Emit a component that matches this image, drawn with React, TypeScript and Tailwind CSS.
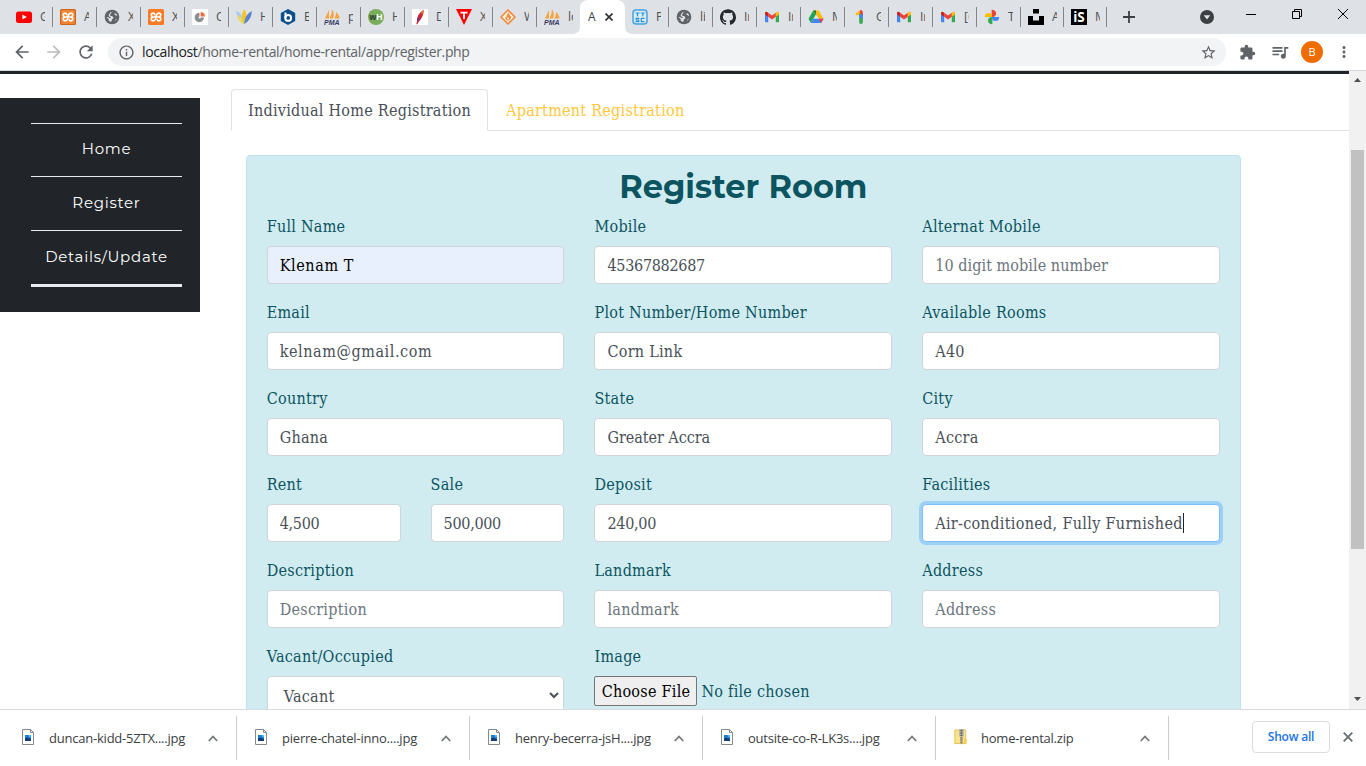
import React from 'react';
import { SiGithub, SiUnsplash } from 'react-icons/si';
import { MdStarBorder, MdExtension, MdQueueMusic, MdMoreVert, MdArrowBack, MdArrowForward, MdRefresh, MdInfoOutline } from 'react-icons/md';

function Youtube() {
  return <svg width="16" height="16" viewBox="0 0 16 16"><rect y="2.5" width="16" height="11.5" rx="2.5" fill="#f00" /><path d="M6.4 5.6v5L10.8 8.1z" fill="#fff" /></svg>;
}
function Xampp({ framed = false }: { framed?: boolean }) {
  return (
    <svg width="16" height="16" viewBox="0 0 16 16">
      <rect width="16" height="16" rx="1.5" fill={framed ? '#c9651a' : '#fb7a24'} />
      {framed && <rect x="1" y="1" width="14" height="14" rx="1" fill="#f08432" />}
      <path d="M5 8H11M6.800 5.500Q6.500 4.200 5 4.200T3.200 5.700Q3.200 7 4.400 8Q3.200 9 3.200 10.300T5 11.800Q6.500 11.800 7.300 10.300L8.700 5.700Q9.500 4.200 11 4.200T12.800 5.700Q12.800 7 11.600 8Q12.800 9 12.800 10.300T11 11.800T9.200 10.500" fill="none" stroke="#fff" strokeWidth="1.700" strokeLinecap="round" />
    </svg>
  );
}
function Globe() {
  return (
    <svg width="16" height="16" viewBox="0 0 16 16">
      <circle cx="8" cy="8" r="7.3" fill="#5f6368" />
      <path d="M9.500 2.500Q7 3 6.800 4.700L5.800 5.800Q6 7 7.500 7T9.500 9Q9.300 10 8 10.200L7.500 12.500Q5.500 13 4.500 11.500L4.800 10.200 3.200 8.800 2.300 8.400 3 8Q5 8 5.300 9L7 8.800Q7 7.800 5.500 7.700Q4 7 5 5.200L6.500 3.200ZM10.300 4.700L10.500 5.600 12 6.500 13.300 7Q13 5.500 11.700 4.200ZM12.800 9.500Q12.300 11.300 11 12.200L11.500 10.500Z" fill="#dee1e6" />
    </svg>
  );
}
function Pie() {
  return <svg width="16" height="16" viewBox="0 0 16 16"><path fill="#fff" d="M0 0h16v16H0z" /><path d="M7.500 8.500V3.800A4.700 4.700 0 1 0 12 8.500Z" fill="#8a8f94" /><path d="M8.600 7.500V3A4.500 4.500 0 0 1 13 7.500Z" fill="#f26b3a" /><circle cx="7.600" cy="8.400" r="1" fill="#fff" /></svg>;
}
function Petals() {
  return <svg width="16" height="16" viewBox="0 0 16 16"><path d="M0 2Q7 4 8 15Q2 13 0 2Z" fill="#a9c8ee" /><path d="M1 6Q6 7 8 15Q3 14 1 6Z" fill="#eadb5c" /><path d="M8 0Q13 6 8 15Q4 7 8 0Z" fill="#f3c622" /><path d="M16 2Q15 12 8 15Q9 5 16 2Z" fill="#5b82d1" /></svg>;
}
function Hexagon() {
  return <svg width="16" height="16" viewBox="0 0 16 16"><path d="M8 0l7.200 4v8L8 16 .8 12V4z" fill="#0d4f8c" /><path d="M5.500 3.500v5.700" stroke="#fff" strokeWidth="2" /><circle cx="8.200" cy="8.900" r="2.900" fill="none" stroke="#fff" strokeWidth="2" /></svg>;
}
function Pma() {
  return <svg width="16" height="16" viewBox="0 0 16 16"><path d="M5 1L1 9.500H5ZM8 0Q11 5 9 9.500H5.500Q8 5 8 0ZM12 3Q15.500 6 15.500 9.500H10.500Q12.500 6 12 3Z" fill="#f9a33c" /><text x="0" y="15.600" textLength="15.500" lengthAdjust="spacingAndGlyphs" fontFamily="Liberation Sans" fontSize="6.800" fontWeight="bold" fontStyle="italic" fill="#3b3b66">PMA</text></svg>;
}
function Wh() {
  return <svg width="16" height="16" viewBox="0 0 16 16"><circle cx="8" cy="8" r="8" fill="#79ad5b" /><text x="1.500" y="11" textLength="13" lengthAdjust="spacingAndGlyphs" fontFamily="Liberation Sans" fontSize="8.500" fontWeight="bold" fill="#fff"><tspan fill="#27351f">w</tspan>H</text></svg>;
}
function Feather() {
  return <svg width="16" height="16" viewBox="0 0 16 16"><path fill="#fff" d="M0 0h16v16H0z" /><path d="M11.700 .8Q12 7 7 12.500L5 15.500L4.300 15L5.200 11.500Q5 5 11.700 .8Z" fill="#c42a3a" /><path d="M5.200 8.500L5 12.500L8.200 10Z" fill="#6d2c7d" /><path d="M11.700 .8L8.500 4L11 5Z" fill="#ef7c24" /></svg>;
}
function Triangle() {
  return <svg width="16" height="16" viewBox="0 0 16 16"><path d="M0 0h16L8 16Z" fill="#f00" /><path d="M4.500 3.600H11.500M8 3.600V10" stroke="#fff" strokeWidth="1.800" /></svg>;
}
function Fire() {
  return <svg width="16" height="16" viewBox="0 0 16 16"><path d="M8 1L15 8L8 15L1 8Z" fill="#fff1e2" stroke="#f5893b" strokeWidth="1.700" strokeLinejoin="round" /><path d="M8.500 3.500Q9 5.500 10.500 7T9.500 11Q8 12 6.500 11T5.500 7.500L6.500 8.500Q6.500 5.500 8.500 3.500Z" fill="#f5893b" /><circle cx="8" cy="9.500" r="1" fill="#fff" /></svg>;
}
function Ttsc() {
  return <svg width="16" height="16" viewBox="0 0 16 16"><rect x="1" y="1" width="14" height="14" rx="3" fill="#d8ebf7" stroke="#46a2df" strokeWidth="1.500" /><path d="M3.500 4h4M5.500 4v3.300M8.800 4h4M10.800 4v3.300M7.300 9.300H4.200v1.700h2.500v1.700H3.500M12.500 9.300H9.300v3.400h3.200" fill="none" stroke="#2e8fd3" strokeWidth="1.200" /></svg>;
}
function Gmail() {
  return <svg width="16" height="16" viewBox="0 0 16 16"><path d="M1 5v7.500q0 .8.800.8H4.200V7Z" fill="#4285f4" /><path d="M15 5v7.500q0 .8-.8.800H11.800V7Z" fill="#34a853" /><path d="M4.200 3.800L8 6.600L11.800 3.800V7.700L8 10.600L4.200 7.700Z" fill="#ea4335" /><path d="M1 4Q1 2.500 2.500 2.700L4.200 3.800V7.700L1 5.400Z" fill="#c5221f" /><path d="M15 4Q15 2.500 13.500 2.700L11.800 3.800V7.700L15 5.400Z" fill="#fbbc04" /></svg>;
}
function Drive() {
  return <svg width="16" height="16" viewBox="0 0 16 16"><path d="M5.300 1.500H8L9.500 5.500L5.300 9.800L2.900 13.900L.5 9.800Z" fill="#23a455" /><path d="M5.300 1.500H10.700L15.500 9.800H10.700L8 5.300Z" fill="#ffba00" /><path d="M5.300 1.500L8 1.500V5.300Z" fill="#188038" /><path d="M8 5.300L10.700 9.800H5.300Z" fill="#dee1e6" /><path d="M5.300 9.800H15.500L13.100 13.900H2.900Z" fill="#4285f4" /><path d="M10.700 9.800H15.500L13.100 13.900Z" fill="#ea4335" /></svg>;
}
function One() {
  return <svg width="16" height="16" viewBox="0 0 16 16"><path d="M7.200 4H10.800V12.800Q10.800 15 9 15T7.200 12.800Z" fill="#34a853" /><path d="M7.200 4H10.800V10L7.200 8Z" fill="#4285f4" /><path d="M8 1.200Q10.800 .2 10.800 3.500V6L7.200 4Z" fill="#ea4335" /><path d="M3.600 4.300L7.600 1.500V5.300L5.500 6.600Q3.300 6.600 3.600 4.300Z" fill="#fbbc04" /></svg>;
}
function Photos() {
  return <svg width="16" height="16" viewBox="0 0 16 16"><path d="M7.600 .8Q12 .8 12 4.500T7.600 8Z" fill="#ea4335" /><path d="M15.200 8Q15.200 12 11.500 12T8 8Z" fill="#4285f4" /><path d="M8.400 15.200Q4 15.200 4 11.500T8.400 8Z" fill="#34a853" /><path d="M.8 8Q.8 4 4.500 4T8 8Z" fill="#fbbc04" /></svg>;
}
function Is() {
  return <svg width="16" height="16" viewBox="0 0 16 16"><path d="M0 0h16v16H0z" /><text x="2.200" y="13" textLength="11.500" lengthAdjust="spacingAndGlyphs" fontFamily="Open Sans" fontSize="14" fontWeight="bold" fill="#fff">iS</text></svg>;
}

const leftTabs = [
  [<Youtube />, 'G'], [<Xampp framed />, 'A'], [<Globe />, 'X'], [<Xampp />, 'X'], [<Pie />, 'C'], [<Petals />, 'H'], [<Hexagon />, 'B'],
  [<Pma />, 'p'], [<Wh />, 'H'], [<Feather />, 'D'], [<Triangle />, 'X'], [<Fire />, 'W'], [<Pma />, 'lo'],
] as const;
const rightTabs = [
  [<Ttsc />, 'P'], [<Globe />, 'li'], [<SiGithub size={16} color="#24292e" />, 'In'], [<Gmail />, 'In'], [<Drive />, 'M'], [<One />, 'G'],
  [<Gmail />, 'In'], [<Gmail />, '[G'], [<Photos />, 'T'], [<SiUnsplash size={16} color="#000" />, 'A'], [<Is />, 'M'],
] as const;

function Tab({ icon, title, last }: { icon: React.ReactNode; title: string; last?: boolean }) {
  return (
    <div className={`flex h-[34px] shrink-0 items-center pl-[7px] ${last ? 'w-[43px]' : 'w-11'}`}>
      <span className="size-4 shrink-0">{icon}</span>
      <span className="ml-2 w-[5px] overflow-hidden whitespace-nowrap text-xs leading-4 text-[#4c5055]">{title}</span>
      <span className={`ml-auto h-5 w-px ${title === 'lo' ? 'bg-transparent' : 'bg-[#82868b]'}`} />
    </div>
  );
}

function TabStrip() {
  return (
    <div className="flex h-[34px] bg-[#dee1e6] pl-[9px]">
      {leftTabs.map(([icon, title], i) => <Tab key={i} icon={icon} title={title} />)}
      <div className="relative -ml-px flex h-[34px] w-[45px] shrink-0 items-center rounded-t-lg bg-white pl-2">
        <svg className="absolute bottom-0 -left-2" width="8" height="8"><path d="M8 0V8H0Q8 8 8 0" fill="#fff" /></svg>
        <svg className="absolute bottom-0 -right-2" width="8" height="8"><path d="M0 0V8H8Q0 8 0 0" fill="#fff" /></svg>
        <span className="w-2 overflow-hidden text-xs text-[#3c4043]">A</span>
        <svg className="ml-[9px]" width="8" height="8" viewBox="0 0 8 8"><path d="M.5.5l7 7m0-7l-7 7" stroke="#2f3336" strokeWidth="1.700" /></svg>
      </div>
      {rightTabs.map(([icon, title], i) => <Tab key={i} icon={icon} title={title} last={i >= 9} />)}
      <svg className="mt-[11px] ml-4" width="12" height="12"><path d="M6 0v12M0 6h12" stroke="#3c4043" strokeWidth="1.800" /></svg>
      <div className="ml-auto flex">
        <svg className="mt-[10px]" width="14" height="14"><circle cx="7" cy="7" r="7" fill="#3c4043" /><path d="M3.700 5.200h6.600L7 9.600z" fill="#dee1e6" /></svg>
        <svg className="mt-[14px] ml-8" width="10" height="1"><path fill="#000" d="M0 0h10v1H0z" /></svg>
        <svg className="mt-[9px] ml-9" width="10" height="10"><path d="M.5 2.500h7v7h-7zM2.500 2.500v-2h7v7h-2" fill="none" stroke="#000" /></svg>
        <svg className="mt-[9px] mr-[18px] ml-9" width="10" height="10"><path d="M0 0l10 10M10 0L0 10" stroke="#000" /></svg>
      </div>
    </div>
  );
}

function Toolbar() {
  return (
    <div className="flex h-9 items-center bg-white pl-3 text-[#5f6368]">
      <MdArrowBack size={20} />
      <MdArrowForward size={20} className="ml-3 text-[#babcbe]" />
      <MdRefresh size={20} className="ml-3" />
      <div className="ml-3 flex h-7 w-[1118px] items-center rounded-full bg-[#f1f3f4] pl-[10px]">
        <MdInfoOutline size={17} />
        <span className="ml-[7px] text-sm leading-5 tracking-[-0.35px] text-[#5f6368]"><span className="text-[#202124]">localhost</span>/home-rental/home-rental/app/register.php</span>
        <MdStarBorder size={17} className="mr-[9px] ml-auto" />
      </div>
      <MdExtension size={17} className="ml-[13px]" />
      <MdQueueMusic size={20} className="ml-[14px]" />
      <span className="ml-[11px] flex size-[22px] items-center justify-center rounded-full bg-[#ef6c00] text-[11px] text-white">B</span>
      <MdMoreVert size={18} className="ml-3" />
    </div>
  );
}

function Sidebar() {
  return (
    <aside className="mt-6 h-[214px] w-[200px] shrink-0 bg-[#212529] pt-[25px] pr-[18px] pl-[31px] font-['Montserrat','Inter',sans-serif] text-[15px] tracking-[0.73px] text-white">
      <a className="flex h-[53px] items-center justify-center border-t border-[#e9ecef] pb-0.5">Home</a>
      <a className="flex h-[54px] items-center justify-center border-t border-[#e9ecef]">Register</a>
      <a className="flex h-[57px] items-center justify-center border-t border-b-3 border-[#e9ecef]">Details/Update</a>
    </aside>
  );
}

type FieldProps = { label: string; value: string; kind?: 'text' | 'placeholder' | 'autofill' | 'focus'; spacing?: string };
const kinds = {
  text: 'border-[#ced4da] bg-white text-[#495057]',
  placeholder: 'border-[#ced4da] bg-white text-[#6c757d]',
  autofill: 'border-[#ced4da] bg-[#e8f0fe] text-black',
  focus: 'border-[#80bdff] bg-white text-[#495057] shadow-[0_0_0_3px_rgba(0,123,255,0.25)]',
};
function Field({ label, value, kind = 'text', spacing = '' }: FieldProps) {
  return (
    <div className="h-[86px] min-w-0">
      <div className="mb-1.5 h-[26px] pt-px leading-6">{label}</div>
      <div className={`flex h-[38px] items-center rounded border px-3 whitespace-nowrap ${kinds[kind]}`}>
        <span className={`pt-0.5 ${spacing}`}>{value}</span>
        {kind === 'focus' && <span className="h-5 w-px bg-[#212529]" />}
      </div>
    </div>
  );
}

function Form() {
  return (
    <div className="ml-[15px] h-[640px] w-[995px] rounded border border-[#bee5eb] bg-[#d1ecf1] pt-3 pr-5 pl-[19.7px] text-[#0c5460]">
      <h2 className="mb-[7px] h-[39px] text-center font-['Montserrat','Inter',sans-serif] text-[32px] leading-[37px] font-bold tracking-normal">Register Room</h2>
      <div className="grid grid-cols-3 gap-x-[30px]">
        <Field label="Full Name" value="Klenam T" kind="autofill" spacing="tracking-[0.6px]" />
        <Field label="Mobile" value="45367882687" spacing="tracking-[-0.3px]" />
        <Field label="Alternat Mobile" value="10 digit mobile number" kind="placeholder" spacing="tracking-[0.06px]" />
        <Field label="Email" value="kelnam@gmail.com" spacing="tracking-[0.57px]" />
        <Field label="Plot Number/Home Number" value="Corn Link" />
        <Field label="Available Rooms" value="A40" />
        <Field label="Country" value="Ghana" />
        <Field label="State" value="Greater Accra" spacing="tracking-[-0.04px]" />
        <Field label="City" value="Accra" />
        <div className="grid grid-cols-2 gap-x-[30px]">
          <Field label="Rent" value="4,500" spacing="tracking-[-0.3px]" />
          <Field label="Sale" value="500,000" spacing="tracking-[-0.3px]" />
        </div>
        <Field label="Deposit" value="240,00" spacing="tracking-[-0.3px]" />
        <Field label="Facilities" value="Air-conditioned, Fully Furnished" kind="focus" spacing="tracking-[0.32px]" />
        <Field label="Description" value="Description" kind="placeholder" />
        <Field label="Landmark" value="landmark" kind="placeholder" />
        <Field label="Address" value="Address" kind="placeholder" />
        <div>
          <div className="mb-1.5 h-[26px] pt-px leading-6">Vacant/Occupied</div>
          <div className="flex h-[38px] items-center justify-between rounded border border-[#ced4da] bg-white pr-1 pl-4 text-[#495057]">
            <span className="pt-1">Vacant</span>
            <svg width="10" height="7"><path d="M1 1l4 4 4-4" fill="none" stroke="#495057" strokeWidth="2" /></svg>
          </div>
        </div>
        <div>
          <div className="mb-1.5 h-[26px] pt-px leading-6">Image</div>
          <div className="flex items-center whitespace-nowrap">
            <span className="flex h-[30px] w-[103px] items-center justify-center rounded-[2px] border border-[#767676] bg-[#efefef] pt-0.5 text-black">Choose File</span>
            <span className="ml-1 pt-0.5">No file chosen</span>
          </div>
        </div>
      </div>
    </div>
  );
}

function Scrollbar() {
  return (
    <div className="flex w-[17px] shrink-0 flex-col items-center bg-[#f1f1f1]">
      <svg className="mt-[7px]" width="7" height="4"><path d="M0 4L3.500 0L7 4z" fill="#505050" /></svg>
      <div className="mt-[68px] h-[399px] w-[13px] bg-[#c1c1c1]" />
      <svg className="mt-auto mb-2" width="7" height="4"><path d="M0 0L3.500 4L7 0z" fill="#505050" /></svg>
    </div>
  );
}

function Picture() {
  return <svg className="mr-px" width="12" height="16" viewBox="0 0 12 16"><path d="M.5.5h8l3 3v12H.5z" fill="#fff" stroke="#85898c" /><path d="M8.500.5v3h3" fill="none" stroke="#85898c" /><path d="M3 6h6v6H3z" fill="#1c7fd0" /><path d="M3 9.500l2-1 4 1.500v2H3z" fill="#123c75" /><path d="M6.500 6h2.500v2L7.500 8.300z" fill="#59b7ec" /></svg>;
}
function Zip() {
  return <svg width="13" height="16" viewBox="0 0 13 17"><path d="M.5 1H12v14.500H.5z" fill="#fce28a" stroke="#e6c14a" /><path d="M10 10h3v6h-3z" fill="#f3cf52" /><path d="M5 0h5v8H5z" fill="#b5b5ad" /><path d="M7.500 1v15" stroke="#57595a" strokeWidth="2" strokeDasharray="1.500 1" /><path d="M6 8h3v8H6z" fill="#999" fillOpacity=".5" /></svg>;
}

const downloads = ['duncan-kidd-5ZTX....jpg', 'pierre-chatel-inno....jpg', 'henry-becerra-jsH....jpg', 'outsite-co-R-LK3s....jpg', 'home-rental.zip'];

function DownloadBar() {
  return (
    <div className="flex h-[57px] items-center border-t border-[#d8dadd] bg-white text-[13px] text-[#3c4043]">
      {downloads.map((name, i) => (
        <div key={name} className={`flex h-11 items-center border-r border-[#cacccf] pr-[18px] ${i === 0 ? 'w-[237px] pl-[22px]' : 'w-[233px] pl-[18px]'}`}>
          <span className="-mt-0.5">{name.endsWith('zip') ? <Zip /> : <Picture />}</span>
          <span className="ml-[14px] pt-0.5 tracking-[-0.22px]">{name}</span>
          <svg className="ml-auto" width="10" height="7"><path d="M.8 6L5 1.500 9.200 6" fill="none" stroke="#75797d" strokeWidth="1.800" /></svg>
        </div>
      ))}
      <span className="mb-[3px] ml-auto flex h-8 w-[78px] items-center justify-center rounded border border-[#dadce0] text-xs font-semibold tracking-[-0.2px] text-[#1a73e8]">Show all</span>
      <svg className="mr-[13px] mb-[3px] ml-[13px]" width="10" height="10"><path d="M.7.7l8.600 8.600m0-8.600L.7 9.300" stroke="#6a6e72" strokeWidth="1.800" /></svg>
    </div>
  );
}

export default function App() {
  return (
    <div className="flex h-[766px] w-[1366px] flex-col overflow-hidden bg-white font-['Segoe_UI','Open_Sans',sans-serif]">
      <TabStrip />
      <Toolbar />
      <div className="flex h-[639px] overflow-hidden border-t border-[#d5d8db]">
        <main className="flex min-w-0 flex-1 flex-col border-t-3 border-[#212529] font-['Roboto_Slab','DejaVu_Serif_Condensed','DejaVu_Serif',serif] text-base tracking-[0.26px]">
          <div className="flex">
            <Sidebar />
            <div className="ml-[31px] flex-1 pt-[15px]">
              <div className="mb-6 flex h-[42px] border-b border-[#dee2e6]">
                <div className="flex h-[42px] w-[257px] items-center justify-center rounded-t border border-b-white border-[#dee2e6] bg-white pt-0.5 whitespace-nowrap text-[#495057]">Individual Home Registration</div>
                <div className="flex h-[42px] items-center pt-0.5 pl-[18px] text-[#ffc83d]">Apartment Registration</div>
              </div>
              <Form />
            </div>
          </div>
        </main>
        <Scrollbar />
      </div>
      <DownloadBar />
    </div>
  );
}
